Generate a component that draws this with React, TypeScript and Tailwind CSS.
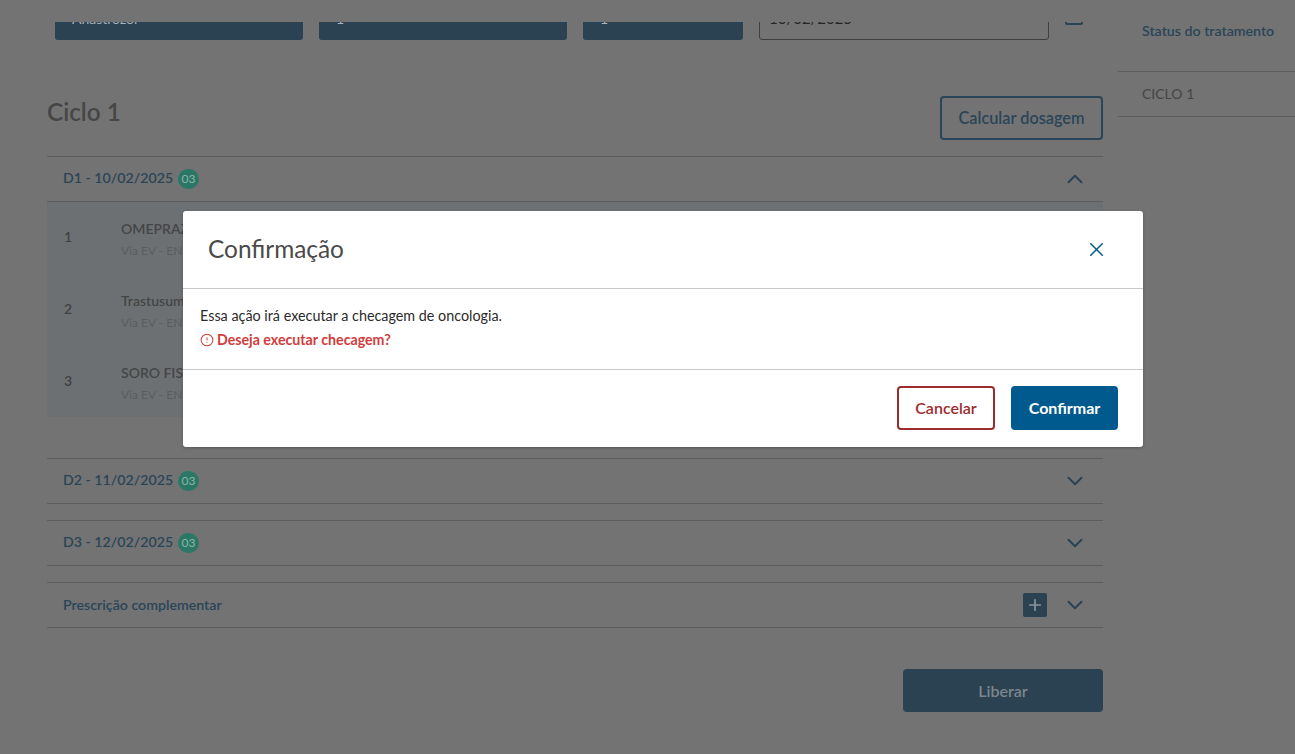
import { ChevronDown, ChevronUp, CircleAlert, Plus, X } from "lucide-react";

const font = "font-['Lato','Noto_Sans',sans-serif]";

const TopField = ({ width, label }: { width: string; label: string }) => {
  return (
    <div className={`${width} flex h-[44px] items-center rounded-b-[3px] bg-[#2a4252] pl-[17px] text-[14px] text-[#a9b3ba]`}>
      {label}
    </div>
  );
};

const Badge = () => {
  return (
    <span className="flex h-[20px] w-[21px] items-center justify-center rounded-full bg-[#2b7765] text-[12px] text-[#8fb3a9]">
      03
    </span>
  );
};

const DayHeader = ({ title, open }: { title: string; open?: boolean }) => {
  return (
    <div className="flex h-[46px] items-center border-y border-[#5d5d5d] pl-[16px] pr-[15px]">
      <span className="mb-[2px] w-[115px] text-[14.2px] font-semibold text-[#2a4558]">{title}</span>
      <Badge />
      <span className="ml-auto text-[#2a4252]">
        {open ? <ChevronUp size={26} strokeWidth={1.75} /> : <ChevronDown size={26} strokeWidth={1.75} />}
      </span>
    </div>
  );
};

const MedRow = ({ index, name }: { index: number; name: string }) => {
  return (
    <div className="flex h-[72px] items-center pl-[17px]">
      <span className="mb-[4px] w-[57px] text-[14px] font-semibold text-[#414141]">{index}</span>
      <div className="mt-[2px] flex flex-col gap-[5px]">
        <span className="text-[14px] font-semibold leading-[18px] text-[#454545]">{name}</span>
        <span className="text-[12px] leading-[16px] text-[#5c5c5c]">Via EV - ENDOVENOSA</span>
      </div>
    </div>
  );
};

const Modal = () => {
  return (
    <div className="absolute left-[183px] top-[211px] w-[960px] rounded-[3px] bg-white pb-[1px] shadow-[0_1px_3px_rgba(0,0,0,0.25)]">
      <div className="flex h-[78px] items-center justify-between border-b border-[#c9c9c9] pl-[25px] pr-[35px]">
        <h2 className="mb-[1px] text-[24.4px] font-normal text-[#4a4a4a]">Confirmação</h2>
        <X size={23} strokeWidth={1.5} className="text-[#005a8d]" />
      </div>
      <div className="flex h-[81px] flex-col border-b border-[#c9c9c9] pl-[17px] pt-[18px]">
        <p className="text-[14.35px] leading-[18px] text-[#2b2b2b]">Essa ação irá executar a checagem de oncologia.</p>
        <p className="mt-[6px] flex items-center gap-[3px] text-[14.2px] font-bold leading-[18px] text-[#d13c3c]">
          <CircleAlert size={14} strokeWidth={1.75} />
          Deseja executar checagem?
        </p>
      </div>
      <div className="flex h-[76px] items-center justify-end gap-[16px] pr-[25px]">
        <button className="h-[44px] w-[98px] rounded-[4px] border-2 border-[#9c2c2c] text-[16px] font-semibold text-[#9c2c2c]">
          Cancelar
        </button>
        <button className="h-[44px] w-[107px] rounded-[4px] bg-[#005a8d] text-[16px] font-bold text-white">
          Confirmar
        </button>
      </div>
    </div>
  );
};

export default function App() {
  return (
    <div className={`${font} relative flex h-[754px] w-[1295px] overflow-hidden bg-[#737373]`}>
      {/* Main column */}
      <main className="w-[1118px] pl-[47px] pt-[22px]">
        <section className="flex h-[18px] items-end gap-[16px] overflow-hidden pl-[8px]">
          <div className="shrink-0"><TopField width="w-[248px]" label="Anastrozol" /></div>
          <div className="shrink-0"><TopField width="w-[248px]" label="1" /></div>
          <div className="shrink-0"><TopField width="w-[160px]" label="1" /></div>
          <div className="flex h-[44px] w-[290px] shrink-0 items-center rounded-[3px] border border-[#3f3f3f] pl-[9px] text-[15px] text-[#262626]">
            10/02/2025
          </div>
          <div className="mb-[15px] h-[18px] w-[18px] shrink-0 rounded-[2px] border-2 border-[#2a4252]" />
        </section>

        <section className="w-[1056px]">
          <div className="mt-[56px] flex items-start justify-between">
            <h1 className="mt-[-2px] text-[24.3px] font-semibold text-[#464646]">Ciclo 1</h1>
            <button className="h-[44px] w-[163px] rounded-[4px] border-2 border-[#2a4558] text-[16.3px] font-semibold text-[#2a4558]">
              Calcular dosagem
            </button>
          </div>

          <div className="mt-[16px]">
            <DayHeader title="D1 - 10/02/2025" open />
            <div className="h-[215px] bg-[#6c7073] py-0">
              <MedRow index={1} name="OMEPRAZOL" />
              <MedRow index={2} name="Trastusumabe" />
              <MedRow index={3} name="SORO FISIOLÓGICO" />
            </div>
          </div>

          <div className="mt-[41px] flex flex-col gap-[16px]">
            <DayHeader title="D2 - 11/02/2025" />
            <DayHeader title="D3 - 12/02/2025" />
            <div className="flex h-[46px] items-center border-y border-[#5d5d5d] pl-[16px] pr-[15px]">
              <span className="text-[14.2px] font-semibold text-[#2a4558]">Prescrição complementar</span>
              <span className="ml-auto mr-[15px] flex h-[24px] w-[24px] items-center justify-center rounded-[2px] bg-[#2a4252] text-[#8b959b]">
                <Plus size={18} strokeWidth={2.25} />
              </span>
              <ChevronDown size={26} strokeWidth={1.75} className="text-[#2a4252]" />
            </div>
          </div>

          <div className="mt-[41px] flex justify-end">
            <button className="h-[43px] w-[200px] rounded-[4px] bg-[#2a4252] text-[16px] font-semibold text-[#7c868c]">
              Liberar
            </button>
          </div>
        </section>
      </main>

      {/* Side panel */}
      <aside className="flex-1 pt-[22px]">
        <div className="flex h-[50px] items-start border-b border-[#5d5d5d] pl-[24px]">
          <span className="text-[14.2px] font-semibold leading-[18px] text-[#2a4558]">Status do tratamento</span>
        </div>
        <div className="flex h-[45px] items-center border-b border-[#5d5d5d] pb-[2px] pl-[24px]">
          <span className="text-[14px] font-normal text-[#454545]">CICLO 1</span>
        </div>
      </aside>

      <Modal />
    </div>
  );
}
